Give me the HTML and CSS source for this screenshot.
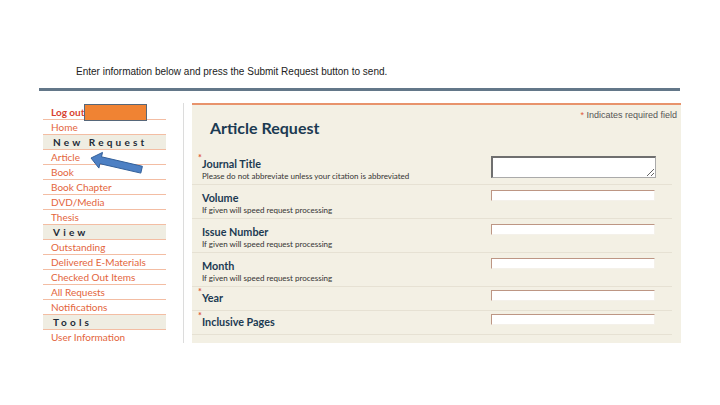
FILE: index.html
```html
<!DOCTYPE html>
<html>

<head>
    <title>Article Request</title>
    <link rel="stylesheet" href="styles.css">
</head>

<body>
    <p class="intro">Enter information below and press the Submit Request button to send.</p>
    <div class="rule"></div>

    <div class="layout">
        <ul class="sidebar">
            <li class="logout">Log out<span class="redact"></span></li>
            <li>Home</li>
            <li class="group">New Request</li>
            <li>Article</li>
            <li>Book</li>
            <li>Book Chapter</li>
            <li>DVD/Media</li>
            <li>Thesis</li>
            <li class="group">View</li>
            <li>Outstanding</li>
            <li>Delivered E-Materials</li>
            <li>Checked Out Items</li>
            <li>All Requests</li>
            <li>Notifications</li>
            <li class="group">Tools</li>
            <li class="last">User Information</li>
        </ul>

        <div class="divider"></div>

        <form class="panel">
            <div class="panel-head">
                <h1>Article Request</h1>
                <p class="note"><span class="req">*</span> Indicates required field</p>
            </div>

            <div class="row first">
                <div class="field">
                    <label class="required">Journal Title</label>
                    <p class="hint">Please do not abbreviate unless your citation is abbreviated</p>
                </div>
                <textarea class="big"></textarea>
            </div>
            <div class="row">
                <div class="field">
                    <label>Volume</label>
                    <p class="hint">If given will speed request processing</p>
                </div>
                <input type="text">
            </div>
            <div class="row">
                <div class="field">
                    <label>Issue Number</label>
                    <p class="hint">If given will speed request processing</p>
                </div>
                <input type="text">
            </div>
            <div class="row">
                <div class="field">
                    <label>Month</label>
                    <p class="hint">If given will speed request processing</p>
                </div>
                <input type="text">
            </div>
            <div class="row short">
                <div class="field">
                    <label class="required">Year</label>
                </div>
                <input type="text">
            </div>
            <div class="row short">
                <div class="field">
                    <label class="required">Inclusive Pages</label>
                </div>
                <input type="text">
            </div>
        </form>
    </div>

    <!-- pointer arrow drawn over the menu -->
    <svg class="arrow" width="60" height="28" viewBox="0 0 60 28">
        <polygon points="5,10 16.5,4.4 15.5,8.8 56.4,18.3 54.8,25.1 13.9,15.7 12.9,20.1"
            fill="#4d80c4" stroke="#33609a" stroke-width="1" stroke-linejoin="round" />
    </svg>
</body>

</html>
```

FILE: styles.css
```css
body {
    margin: 0;
    font-family: Lato, "Open Sans", sans-serif;
    background: #fff;
    position: relative;
    width: 720px;
    height: 405px;
}

.intro {
    margin: 0;
    padding: 66px 0 0 76px;
    font-family: "Liberation Sans", Arial, sans-serif;
    font-size: 10px;
    line-height: 12px;
    color: #222;
}

.rule {
    margin: 10px 0 0 39px;
    width: 641px;
    height: 3px;
    background-color: #637789;
}

.layout {
    display: flex;
    align-items: flex-start;
    margin: 12px 0 0 43px;
}

/* Left menu */
.sidebar {
    list-style: none;
    margin: 2px 0 0;
    padding: 0;
    width: 123px;
}

.sidebar li {
    height: 14px;
    line-height: 14px;
    padding-left: 8px;
    border-bottom: 1px solid #f3bda3;
    font-size: 10px;
    color: #e3653c;
    white-space: nowrap;
}

.sidebar li.last {
    border-bottom: none;
}

.sidebar .logout {
    color: #d8412e;
    font-weight: bold;
}

.redact {
    display: inline-block;
    vertical-align: top;
    width: 61px;
    height: 15px;
    margin-top: -1px;
    background-color: #f08333;
    border: 1px solid #56677a;
}

.sidebar .group {
    padding-left: 10px;
    background-color: #efede2;
    color: #1d2a36;
    font-weight: bold;
    letter-spacing: 3.2px;
}

.divider {
    width: 1px;
    height: 240px;
    margin-left: 17px;
    background-color: #dcdcdc;
}

/* Request form */
.panel {
    margin: 0 0 0 8px;
    width: 489px;
    height: 238px;
    background-color: #f3f0e4;
    border-top: 2px solid #e8936c;
}

.panel-head {
    display: flex;
    justify-content: space-between;
    height: 45px;
}

.panel-head h1 {
    margin: 13px 0 0 18px;
    font-size: 16px;
    line-height: 20px;
    color: #1b3a52;
}

.note {
    margin: 5px 4px 0 0;
    font-family: "Liberation Sans", Arial, sans-serif;
    font-size: 9px;
    color: #555;
}

.req {
    color: #e0573a;
}

.row {
    display: flex;
    align-items: flex-start;
    margin-right: 9px;
    padding: 6px 0 1px 10px;
    border-bottom: 1px solid #e6e1d3;
}

.row.first {
    padding-top: 7px;
}

.row.short {
    padding: 4px 0 6px 10px;
}

.field {
    width: 289px;
}

.field label {
    display: block;
    position: relative;
    font-size: 10.8px;
    line-height: 13px;
    font-weight: bold;
    color: #1c3a52;
}

.field label.required::before {
    content: "*";
    position: absolute;
    left: -4px;
    top: -6px;
    font-size: 9px;
    color: #e0573a;
}

.hint {
    margin: 0;
    font-size: 8px;
    line-height: 13px;
    color: #333;
}

.row input {
    box-sizing: border-box;
    width: 164px;
    height: 11px;
    margin-top: -1px;
    padding: 0;
    background: #fff;
    border: 1px solid #f4f1ea;
    border-top-color: #bd9684;
    border-left-color: #bd9684;
}

.row textarea {
    box-sizing: border-box;
    width: 165px;
    height: 22px;
    margin-top: -1px;
    padding: 0;
    background: #fff;
    border: 1px solid #aaa;
    border-top: 2px solid #6f6f6f;
    border-left: 2px solid #6f6f6f;
}

.arrow {
    position: absolute;
    left: 86px;
    top: 148px;
}
```
